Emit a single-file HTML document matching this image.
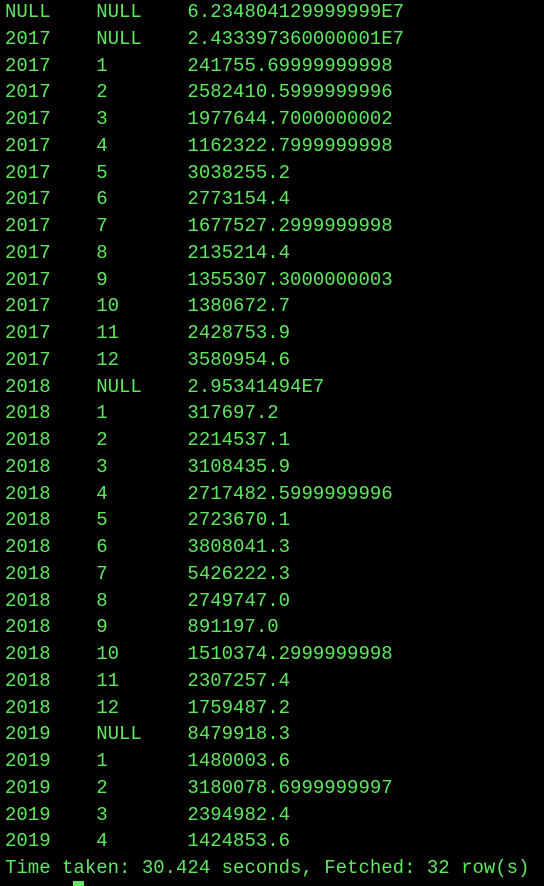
<!DOCTYPE html>
<html><head><style>
html,body{margin:0;background:#000;width:544px;height:886px;overflow:hidden}
pre{margin:0;position:absolute;left:5px;top:-1px;font-family:"Liberation Mono",monospace;font-size:19px;line-height:26.75px;color:#5fe85f;white-space:pre}
.cur{position:absolute;left:73px;top:881px;width:11px;height:5px;background:#5fe85f}
</style></head><body>
<pre>NULL    NULL    6.234804129999999E7
2017    NULL    2.433397360000001E7
2017    1       241755.69999999998
2017    2       2582410.5999999996
2017    3       1977644.7000000002
2017    4       1162322.7999999998
2017    5       3038255.2
2017    6       2773154.4
2017    7       1677527.2999999998
2017    8       2135214.4
2017    9       1355307.3000000003
2017    10      1380672.7
2017    11      2428753.9
2017    12      3580954.6
2018    NULL    2.95341494E7
2018    1       317697.2
2018    2       2214537.1
2018    3       3108435.9
2018    4       2717482.5999999996
2018    5       2723670.1
2018    6       3808041.3
2018    7       5426222.3
2018    8       2749747.0
2018    9       891197.0
2018    10      1510374.2999999998
2018    11      2307257.4
2018    12      1759487.2
2019    NULL    8479918.3
2019    1       1480003.6
2019    2       3180078.6999999997
2019    3       2394982.4
2019    4       1424853.6
Time taken: 30.424 seconds, Fetched: 32 row(s)</pre>
<div class="cur"></div>
</body></html>
